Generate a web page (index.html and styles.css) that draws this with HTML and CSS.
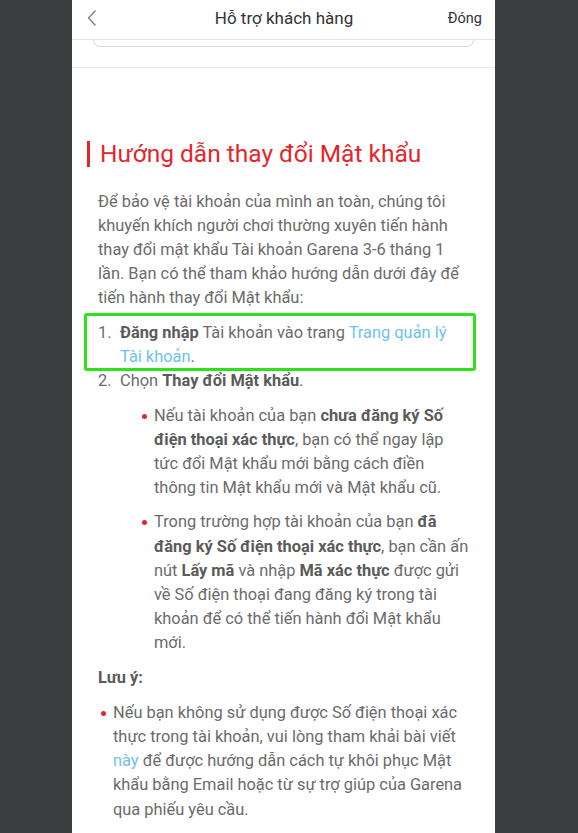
FILE: index.html
```html
<!DOCTYPE html>
<html lang="vi">
<head>
<meta charset="utf-8">
<title>Hỗ trợ khách hàng</title>
<link rel="stylesheet" href="styles.css">
</head>
<body>
<div class="page">
  <header class="topbar">
    <span class="back">
      <svg width="12" height="20" viewBox="0 0 12 20"><path d="M9.5 2.5 L2.5 10 L9.5 17.5" fill="none" stroke="#777" stroke-width="1.2"/></svg>
    </span>
    <h1 class="topbar-title">Hỗ trợ khách hàng</h1>
    <span class="close">Đóng</span>
  </header>
  <div class="card-tail"></div>
  <div class="divider"></div>
  <article class="content">
    <h2 class="title">Hướng dẫn thay đổi Mật khẩu</h2>
    <p class="para">Để bảo vệ tài khoản của mình an toàn, chúng tôi khuyến khích người chơi thường xuyên tiến hành thay đổi mật khẩu Tài khoản Garena 3-6 tháng 1 lần. Bạn có thể tham khảo hướng dẫn dưới đây để tiến hành thay đổi Mật khẩu:</p>
    <ol class="steps">
      <li class="step highlight"><span class="num">1.</span><span class="step-text"><b>Đăng nhập</b> Tài khoản vào trang <a class="link">Trang quản lý Tài khoản</a>.</span></li>
      <li class="step"><span class="num">2.</span><span class="step-text">Chọn <b>Thay đổi Mật khẩu</b>.
        <ul class="bullets">
          <li>Nếu tài khoản của bạn <b>chưa đăng ký Số điện thoại xác thực</b>, bạn có thể ngay lập tức đổi Mật khẩu mới bằng cách điền thông tin Mật khẩu mới và Mật khẩu cũ.</li>
          <li>Trong trường hợp tài khoản của bạn <b>đã đăng ký Số điện thoại xác thực</b>, bạn cần ấn nút <b>Lấy mã</b> và nhập <b>Mã xác thực</b> được gửi về Số điện thoại đang đăng ký trong tài khoản để có thể tiến hành đổi Mật khẩu mới.</li>
        </ul>
      </span></li>
    </ol>
    <p class="note"><b>Lưu ý:</b></p>
    <ul class="bullets note-list">
      <li>Nếu bạn không sử dụng được Số điện thoại xác thực trong tài khoản, vui lòng tham khải bài viết <a class="link">này</a> để được hướng dẫn cách tự khôi phục Mật khẩu bằng Email hoặc từ sự trợ giúp của Garena qua phiếu yêu cầu.</li>
    </ul>
  </article>
</div>
</body>
</html>
```

FILE: styles.css
```css
html, body {
  margin: 0;
  padding: 0;
  background: #3d3e40;
  height: 100%;
  overflow: hidden;
}
body {
  font-family: Roboto, "Noto Sans", sans-serif;
}
.page {
  width: 423px;
  margin-left: 72px;
  background: #fff;
  min-height: 100%;
}
.topbar {
  height: 40px;
  display: flex;
  align-items: center;
  border-bottom: 1px solid #e4e4e4;
  box-sizing: border-box;
  padding: 0 13px 3px 14px;
}
.back {
  width: 40px;
  display: flex;
  align-items: center;
}
.topbar-title {
  flex: 1;
  margin: 0;
  text-align: center;
  font-size: 17px;
  font-weight: 400;
  color: #333;
}
.close {
  width: 40px;
  text-align: right;
  font-size: 14.5px;
  color: #333;
}
.card-tail {
  margin: 0 21px;
  height: 6px;
  border: 1px solid #dadada;
  border-top: none;
  border-radius: 0 0 14px 14px;
}
.divider {
  margin-top: 20px;
  border-top: 1px solid #e6e6e6;
}
.content {
  padding: 73px 26px 0 26px;
  color: #6b6b6b;
  font-size: 16.4px;
  line-height: 24.2px;
}
.title {
  margin: 0 0 23px -11px;
  border-left: 3px solid #e3262b;
  padding-left: 10px;
  font-size: 24.5px;
  font-weight: 400;
  line-height: 26px;
  color: #e3262b;
}
.para {
  margin: 0 0 11px;
  line-height: 24px;
}
b {
  color: #5b5b5b;
  font-weight: 700;
}
.link {
  color: #6ec2ea;
}
.steps {
  list-style: none;
  margin: 0;
  padding: 0;
}
.step {
  display: flex;
}
.num {
  width: 22px;
  flex: none;
}
.highlight {
  position: relative;
}
.highlight::after {
  content: "";
  position: absolute;
  left: -14px;
  right: -7px;
  top: -8px;
  bottom: -2px;
  border: 3px solid #2ee21a;
  border-radius: 3px;
}
.bullets {
  list-style: none;
  margin: 10px 0 0 22px;
  padding: 0;
}
.bullets li {
  position: relative;
  padding-left: 12px;
  margin-bottom: 10px;
}
.bullets li::before {
  content: "";
  position: absolute;
  left: 0;
  top: 10px;
  width: 5px;
  height: 5px;
  border-radius: 50%;
  background: #e3262b;
}
.note {
  margin: 0 0 11px;
}
.note-list {
  margin: 0;
  margin-left: 3px;
}
```
